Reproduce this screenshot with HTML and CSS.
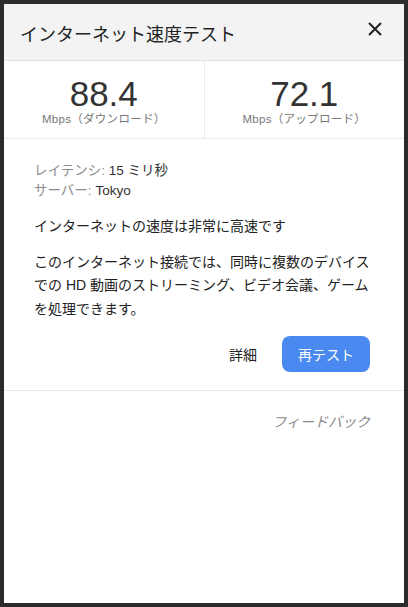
FILE: index.html
```html
<!DOCTYPE html>
<html lang="ja">
<head>
<meta charset="utf-8">
<link rel="stylesheet" href="styles.css">
</head>
<body>
<div class="panel">
  <div class="header">
    <div class="title">インターネット速度テスト</div>
    <svg class="close" width="16" height="16" viewBox="0 0 16 16"><path d="M2 2L14 14M14 2L2 14" stroke="#222" stroke-width="2" fill="none"/></svg>
  </div>
  <div class="stats">
    <div class="stat">
      <div class="num">88.4</div>
      <div class="unit">Mbps（ダウンロード）</div>
    </div>
    <div class="stat">
      <div class="num">72.1</div>
      <div class="unit">Mbps（アップロード）</div>
    </div>
  </div>
  <div class="body">
    <div class="info">
      <div><span class="label">レイテンシ:</span> 15 ミリ秒</div>
      <div><span class="label">サーバー:</span> Tokyo</div>
    </div>
    <p class="text">インターネットの速度は非常に高速です</p>
    <p class="text">このインターネット接続では、同時に複数のデバイスでの HD 動画のストリーミング、ビデオ会議、ゲームを処理できます。</p>
    <div class="actions">
      <span class="details">詳細</span>
      <span class="retest">再テスト</span>
    </div>
  </div>
  <div class="footer">
    <span class="feedback">フィードバック</span>
  </div>
</div>
</body>
</html>
```

FILE: styles.css
```css
html, body {
  margin: 0;
  padding: 0;
  background: #2b2b2b;
}
body {
  padding: 4px 4px 4px 4px;
  font-family: "Liberation Sans", "Noto Sans CJK JP", sans-serif;
}
.panel {
  background: #fff;
  height: 599px;
  width: 400px;
  display: flex;
  flex-direction: column;
}
.header {
  background: #f3f3f3;
  height: 56px;
  flex: none;
  border-bottom: 1px solid #e2e2e2;
  display: flex;
  align-items: center;
  justify-content: space-between;
  padding: 0 21px 0 16px;
}
.title {
  font-family: "Noto Sans CJK JP", sans-serif;
  font-size: 18px;
  color: #222;
  padding-top: 2px;
}
.close {
  margin-top: -6px;
}
.stats {
  display: flex;
  height: 77px;
  flex: none;
  border-bottom: 1px solid #ececec;
}
.stat {
  flex: 1;
  display: flex;
  flex-direction: column;
  align-items: center;
  padding-top: 15px;
}
.stat + .stat {
  border-left: 1px solid #ececec;
}
.num {
  font-size: 35px;
  line-height: 36px;
  color: #333;
}
.unit {
  font-size: 11.5px;
  color: #777;
  margin-top: -2px;
  letter-spacing: 0.3px;
}
.body {
  padding: 22px 34px 0 30px;
  font-family: "Liberation Sans", "Noto Sans CJK JP", sans-serif;
  border-bottom: 1px solid #e8e8e8;
  height: 252px;
  flex: none;
  box-sizing: border-box;
}
.info {
  font-size: 13.5px;
  line-height: 20px;
  color: #333;
}
.label {
  color: #8c8c8c;
}
.text {
  margin: 14px 0 0 0;
  font-size: 14px;
  line-height: 23.5px;
  color: #222;
}
.text + .text {
  margin-top: 12px;
}
.actions {
  display: flex;
  justify-content: flex-end;
  align-items: center;
  margin-top: 15px;
}
.details {
  font-size: 14px;
  color: #222;
  margin-right: 25px;
}
.retest {
  background: #4a89f0;
  color: #fff;
  font-size: 14px;
  width: 88px;
  height: 36px;
  border-radius: 8px;
  display: flex;
  align-items: center;
  justify-content: center;
}
.footer {
  display: flex;
  justify-content: flex-end;
  padding: 20px 34px 0 0;
}
.feedback {
  font-size: 14px;
  font-style: italic;
  color: #8a8a8a;
}
```
